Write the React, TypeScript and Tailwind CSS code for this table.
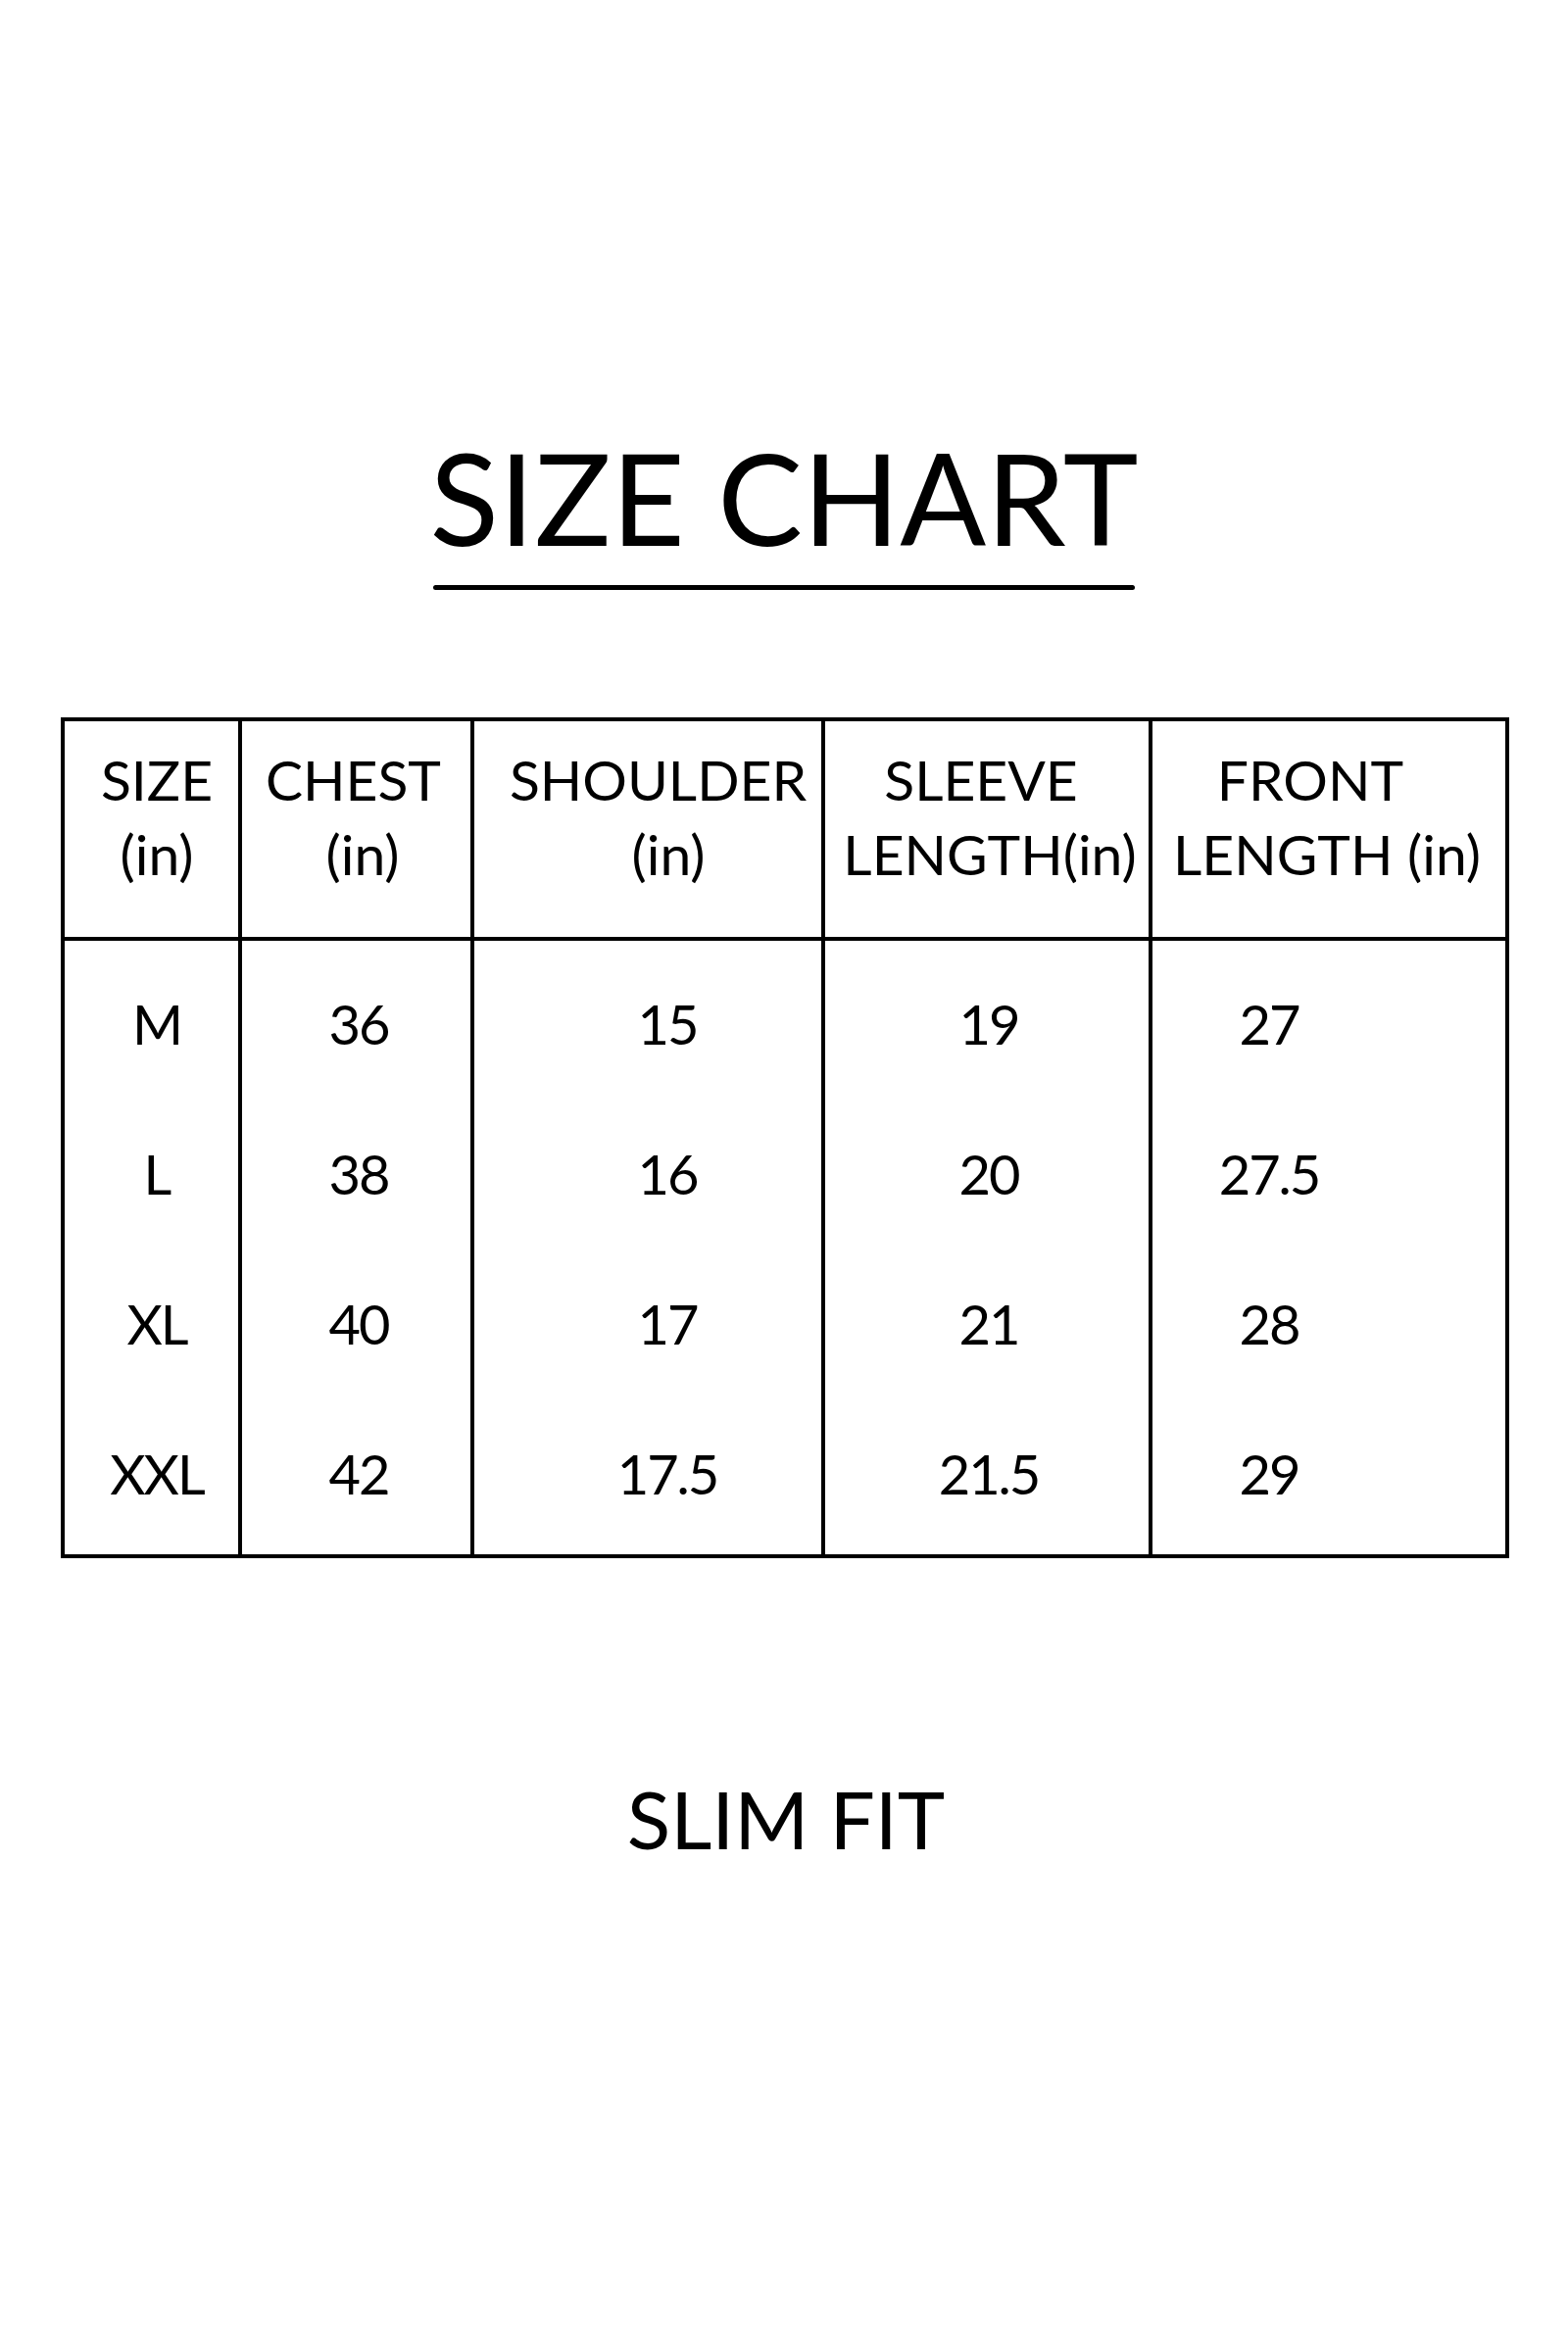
import React from "react";

type HeaderCol = { lines: { text: string; cls: string }[]; border: string };

const headers: HeaderCol[] = [
  {
    border: "",
    lines: [
      { text: "SIZE", cls: "pl-[11px]" },
      { text: "(in)", cls: "pl-[11px]" },
    ],
  },
  {
    border: "border-l-4",
    lines: [
      { text: "CHEST", cls: "pr-[6px]" },
      { text: "(in)", cls: "pl-[13px]" },
    ],
  },
  {
    border: "border-l-4",
    lines: [
      { text: "SHOULDER", cls: "pl-[21px]" },
      { text: "(in)", cls: "pl-[42px]" },
    ],
  },
  {
    border: "border-l-4",
    lines: [
      { text: "SLEEVE", cls: "pr-[12px]" },
      { text: "LENGTH(in)", cls: "pl-[6px]" },
    ],
  },
  {
    border: "border-l-4",
    lines: [
      { text: "FRONT", cls: "pr-[38px]" },
      { text: "LENGTH (in)", cls: "pr-[4px]" },
    ],
  },
];

const bodyCols = [
  { border: "", shift: "pl-[11px]" },
  { border: "border-l-4", shift: "pl-[5px]" },
  { border: "border-l-4", shift: "pl-[40px]" },
  { border: "border-l-4", shift: "pl-[4px]" },
  { border: "border-l-4", shift: "pr-[122px]" },
];

const rows = [
  { cls: "h-[161px] pt-[8px]", cells: ["M", "36", "15", "19", "27"] },
  { cls: "h-[153px]", cells: ["L", "38", "16", "20", "27.5"] },
  { cls: "h-[153px]", cells: ["XL", "40", "17", "21", "28"] },
  { cls: "h-[159px] pb-[6px]", cells: ["XXL", "42", "17.5", "21.5", "29"] },
];

export default function App() {
  return (
    <div className="min-h-[2400px] w-[1600px] bg-white text-black font-['Lato',sans-serif]">
      <div className="pt-[442px] text-center text-[130px] leading-none whitespace-nowrap">
        SIZE CHART
      </div>
      <div className="mx-auto mt-[25px] h-[5px] w-[716px] rounded-full bg-black" />

      <div className="ml-[62px] mt-[130px] w-[1478px] border-4 border-black">
        <div className="grid grid-cols-[177px_237px_358px_334px_364px]">
          {headers.map((h, i) => (
            <div
              key={`h${i}`}
              className={`h-[224px] border-b-4 border-black pt-[21px] text-center text-[57px] leading-[76px] whitespace-nowrap ${h.border}`}
            >
              {h.lines.map((l, j) => (
                <div key={j} className={l.cls}>
                  {l.text}
                </div>
              ))}
            </div>
          ))}
          {rows.map((r, ri) =>
            r.cells.map((c, ci) => (
              <div
                key={`r${ri}c${ci}`}
                className={`flex items-center justify-center border-black text-[56px] leading-none tracking-[-2px] whitespace-nowrap ${r.cls} ${bodyCols[ci].border} ${bodyCols[ci].shift}`}
              >
                {c}
              </div>
            ))
          )}
        </div>
      </div>

      <div className="mt-[224px] pl-[4px] text-center text-[82px] leading-none whitespace-nowrap">
        SLIM FIT
      </div>
    </div>
  );
}
